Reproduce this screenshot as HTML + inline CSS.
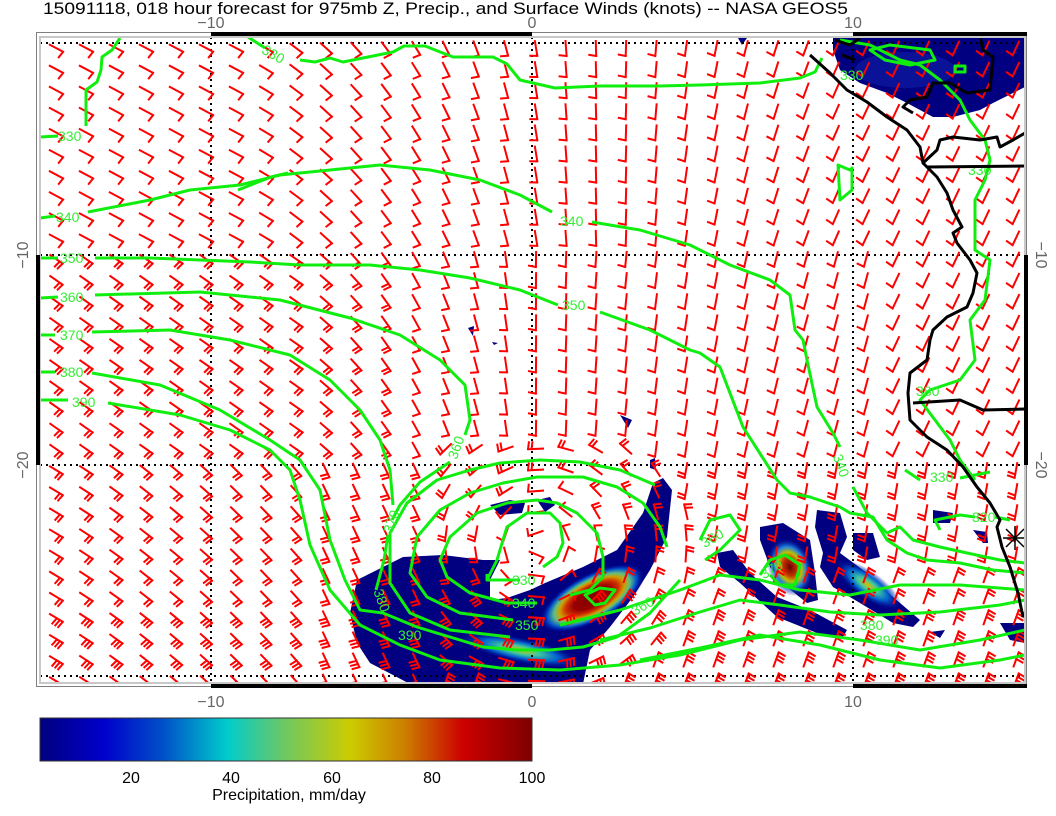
<!DOCTYPE html>
<html><head><meta charset="utf-8"><style>
html,body{margin:0;padding:0;background:#fff;}
body{width:1056px;height:816px;overflow:hidden;position:relative;font-family:"Liberation Sans",sans-serif;}
svg{position:absolute;left:0;top:0;}
</style></head><body>
<svg width="1056" height="816" viewBox="0 0 1056 816" xmlns="http://www.w3.org/2000/svg">
<defs>
<clipPath id="mc"><rect x="40" y="37" width="985" height="646"/></clipPath>
<linearGradient id="cb" x1="0" x2="1" y1="0" y2="0">
<stop offset="0" stop-color="#00007f"/><stop offset="0.13" stop-color="#0000cc"/>
<stop offset="0.25" stop-color="#0050c8"/><stop offset="0.38" stop-color="#00cccc"/>
<stop offset="0.5" stop-color="#70c860"/><stop offset="0.63" stop-color="#cccc00"/>
<stop offset="0.74" stop-color="#cc8000"/><stop offset="0.86" stop-color="#cc0000"/>
<stop offset="1" stop-color="#7f0000"/></linearGradient>
<radialGradient id="core1"><stop offset="0" stop-color="#7f0000"/><stop offset="0.35" stop-color="#990000"/><stop offset="0.5" stop-color="#d03000"/><stop offset="0.62" stop-color="#d0a000"/><stop offset="0.72" stop-color="#60c080"/><stop offset="0.85" stop-color="#0050d0"/><stop offset="1" stop-color="#000090" stop-opacity="0"/></radialGradient>
<radialGradient id="core2"><stop offset="0" stop-color="#d0c000"/><stop offset="0.3" stop-color="#40c8a0"/><stop offset="0.6" stop-color="#0060d0"/><stop offset="1" stop-color="#000090" stop-opacity="0"/></radialGradient>
<radialGradient id="core3"><stop offset="0" stop-color="#6a0000"/><stop offset="0.3" stop-color="#c03000"/><stop offset="0.5" stop-color="#c0c000"/><stop offset="0.7" stop-color="#2080e0"/><stop offset="1" stop-color="#000090" stop-opacity="0"/></radialGradient>
</defs>
<text x="43" y="14" font-size="17" fill="#000" textLength="805" lengthAdjust="spacingAndGlyphs">15091118, 018 hour forecast for 975mb Z, Precip., and Surface Winds (knots) -- NASA GEOS5</text>
<g clip-path="url(#mc)">
<g fill="#000080">
<path d="M357,580 L403,557 443,555 483,560 500,560 490,580 490,600 507,598 530,590 545,583 583,567 617,550 643,513 653,483 663,478 672,490 667,537 650,570 633,597 610,627 590,650 583,684 410,684 393,675 370,663 357,643 350,613Z"/>
<path d="M490,505 L510,500 525,503 522,513 500,515Z"/><path d="M537,500 L550,497 555,505 545,512Z"/>
<path d="M760,527 L783,523 810,540 815,573 818,600 807,603 787,587 770,567 760,540Z"/>
<path d="M717,553 L733,550 750,573 777,597 810,610 847,630 843,637 817,633 777,617 740,583 720,567Z"/>
<path d="M817,510 L840,513 847,537 840,553 867,573 893,597 920,620 913,627 893,623 860,603 833,587 820,567 823,553 815,527Z"/>
<path d="M853,533 L873,533 880,557 867,560 853,550Z"/>
<path d="M933,510 L953,513 950,523 933,523Z"/><path d="M973,530 L987,532 988,543 983,543Z"/>
<path d="M1000,623 L1025,623 1025,643 1010,640Z"/><path d="M930,632 L945,630 940,638Z"/>
<path d="M620,415 L632,420 628,428Z"/><path d="M650,460 L655,458 656,470 650,468Z"/>
<path d="M468,328 L474,326 473,336Z"/><path d="M492,342 L498,343 494,345Z"/>
<path d="M833,37 L1025,37 1025,87 1013,93 993,103 980,110 953,117 933,117 920,110 907,103 887,93 860,83 840,70 833,50Z"/>
<path d="M738,38 L747,38 742,45Z"/>
</g>
<ellipse cx="592" cy="598" rx="58" ry="24" transform="rotate(-28 592 598)" fill="url(#core1)"/>
<ellipse cx="520" cy="650" rx="65" ry="13" transform="rotate(12 520 650)" fill="url(#core2)"/>
<ellipse cx="790" cy="567" rx="22" ry="30" transform="rotate(-20 790 567)" fill="url(#core3)"/>
<ellipse cx="868" cy="585" rx="40" ry="14" transform="rotate(35 868 585)" fill="url(#core2)"/>
<ellipse cx="905" cy="70" rx="50" ry="18" fill="#1020a8" opacity="0.6"/>
<g stroke="#000" stroke-width="2" stroke-dasharray="2 4" fill="none">
<path d="M40,43H1025M40,255H1025M40,465H1025M40,676H1025M211,37V683M532,37V683M853,37V683"/>
</g>
<g id="barbs" stroke="#ff0000" stroke-width="2" fill="none" stroke-linecap="square"></g>
<g stroke="#10ee10" stroke-width="3" fill="none" stroke-linejoin="round">
<path d="M40,137 L58,136 M86,126 L86,90 97,82 101,70 102,57 112,50 120,38"/>
<path d="M248,37 L265,48 M300,60 L315,62 330,58 343,62 393,52 404,46 425,46 453,57 493,57 507,64 520,80 555,88 600,86 660,86 700,85 760,83 800,78 815,72 822,58"/>
<path d="M238,190 L271,177 288,173"/>
<path d="M40,218 L55,216 M88,212 L150,200 190,190 240,185 280,175 330,170 380,165 430,170 480,180 520,195 552,212 M592,222 L640,230 690,245 730,265 770,280 790,295 795,330 803,340 807,360 817,407 833,433 840,447 M853,487 L867,513 877,523 887,533 900,527 913,540 940,547 967,553 1000,560 1025,563"/>
<path d="M40,258 L58,258 M95,258 L150,258 250,262 300,265 370,265 420,270 470,278 520,290 558,305 M600,312 L650,330 690,350 700,353 720,367 743,427 777,480 790,493 810,497 840,507 850,513 873,517 887,540 907,553 927,560 960,563 993,570 1025,573"/>
<path d="M40,298 L58,297 M95,295 L200,292 280,300 350,318 400,335 440,360 465,385 470,420 465,435 M450,462 L420,482 400,505 392,520"/>
<path d="M40,335 L55,335 M92,332 L170,330 230,340 290,355 330,380 360,410 380,440 390,470 393,505 M388,535 L384,560 376,590"/>
<path d="M40,372 L55,372 M92,373 L160,385 220,410 270,440 300,460 320,490 330,540 345,580 360,610 383,613 417,627 450,637 483,647 517,650 550,650 583,647 617,637 650,613 680,580"/>
<path d="M40,400 L68,400 M108,403 L180,415 230,430 270,450 290,470 300,500 310,545 330,590 360,625 400,645 440,660 500,668 560,670 620,665 680,655 740,640 800,632 860,640 920,650 980,640 1025,630"/>
<path d="M487,580 L497,560 503,540 507,527 527,513 550,513 560,523 563,543 557,557 543,567 M520,580 L487,580 487,574"/>
<path d="M537,603 L507,603 470,593 447,577 440,560 450,537 477,513 507,503 537,500 557,503 577,513 597,533 603,557 603,577 590,590 570,595"/>
<path d="M513,620 L460,613 427,597 410,573 417,537 440,510 470,493 503,483 537,477 583,477 617,487 643,503 660,527 667,547"/>
<path d="M510,637 L450,630 410,613 390,583 390,533 407,503 437,480 470,470 500,463 540,460 580,462 620,470 655,485"/>
<path d="M595,605 L585,595 600,588 615,590 605,603Z"/>
<path d="M560,625 L620,610 680,590 720,575 760,580 800,590 850,595 900,585 960,585 1025,590"/>
<path d="M600,640 L650,628 700,612 740,600 780,605 830,612 880,615 940,612 1000,605 1025,600"/>
<path d="M640,660 L700,648 760,635 820,645 880,660 940,668 1000,660 1025,655"/>
<path d="M700,540 L710,520 730,515 740,530 720,550 705,560 M760,575 L770,560 785,555 800,565 795,585 780,585 770,575"/>
<path d="M920,480 L905,470 M960,478 L990,472 M940,530 L935,520 960,515 975,517 M995,517 L1010,520"/>
<path d="M850,170 L838,165 840,200 852,190 852,168Z"/>
<path d="M840,40 L870,45 900,60 920,65 940,80 960,100 970,120 985,140 990,160 985,180 975,200 975,250 990,260 985,300 970,320 975,360 960,380 930,390 920,400 935,420 950,440 960,460 975,480"/>
<path d="M870,50 L890,45 930,50 935,60 910,65 885,60Z"/><path d="M955,66 h10 v6 h-10Z"/>
</g>
<g fill="#33ee33" font-size="14">
<text x="58" y="141">330</text><text x="262" y="56" transform="rotate(30 268 52)">330</text>
<text x="56" y="222">340</text><text x="560" y="226">340</text>
<text x="60" y="263">350</text><text x="562" y="310">350</text>
<text x="60" y="302">360</text><text x="60" y="340">370</text>
<text x="60" y="377">380</text><text x="72" y="407">390</text>
<text x="382" y="530" transform="rotate(-70 390 525)">370</text>
<text x="446" y="455" transform="rotate(-70 455 450)">360</text>
<text x="512" y="585">330</text><text x="512" y="608">340</text><text x="515" y="630">350</text>
<text x="374" y="600" transform="rotate(70 380 595)">380</text><text x="398" y="640">390</text>
<text x="630" y="612" transform="rotate(-30 640 605)">360</text>
<text x="700" y="543" transform="rotate(-30 712 537)">360</text>
<text x="760" y="575" transform="rotate(-30 770 570)">370</text>
<text x="860" y="630">380</text><text x="875" y="645">390</text>
<text x="930" y="482">330</text><text x="972" y="522">320</text>
<text x="968" y="175">330</text><text x="840" y="80">330</text>
<text x="832" y="467" transform="rotate(70 840 462)">340</text>
<text x="916" y="396">380</text>
</g>
<g stroke="#000" stroke-width="3" fill="none" stroke-linejoin="round">
<path d="M810,55 L830,73 847,90 867,102 887,117 907,130 920,147 923,163 937,177 947,193 953,210 962,227 953,233 957,243 970,260 977,273 973,293 967,307 947,317 933,330 930,340 927,360 910,373 908,393 910,420 927,437 947,450 963,467 977,487 990,503 1000,520 997,527 1002,547 1010,567 1018,593 1023,617"/>
<path d="M913,403 L960,400 983,410 1025,409"/>
<path d="M927,167 L1025,166"/>
<path d="M923,163 L937,150 940,140 953,137 980,140 997,137 1000,147 1013,140 1025,133"/>
<path d="M980,37 L983,50 993,57 990,90 967,93 950,83 933,83 927,97 910,100 903,107 913,113"/>
<path d="M835,40 L850,45 860,38 M842,55 L855,60"/>
</g>
<g stroke="#000" stroke-width="1.5"><path d="M1003,538 H1027 M1015,526 V550 M1006,529 L1024,547 M1024,529 L1006,547"/></g>
</g>
<rect x="36.5" y="32.5" width="990" height="654" fill="none" stroke="#808080"/>
<rect x="40" y="37" width="985" height="646" fill="none" stroke="#c8c8c8" stroke-width="2"/>
<g fill="#000">
<rect x="211" y="32" width="321" height="4"/><rect x="853" y="32" width="174" height="4"/>
<rect x="211" y="684" width="321" height="4"/><rect x="853" y="684" width="174" height="4"/>
<rect x="36" y="255" width="4" height="210"/><rect x="1024" y="255" width="4" height="210"/>
</g>
<g fill="#666" font-size="16" text-anchor="middle">
<text x="211" y="28">−10</text><text x="532" y="28">0</text><text x="853" y="28">10</text>
<text x="211" y="707">−10</text><text x="532" y="707">0</text><text x="853" y="707">10</text>
<text transform="translate(28,255) rotate(-90)">−10</text><text transform="translate(28,465) rotate(-90)">−20</text>
<text transform="translate(1036,255) rotate(90)">−10</text><text transform="translate(1036,465) rotate(90)">−20</text>
</g>
<rect x="40" y="718" width="492" height="43" fill="url(#cb)" stroke="#333" stroke-width="1"/>
<g fill="#000" font-size="16" text-anchor="middle">
<text x="131" y="783">20</text><text x="231" y="783">40</text><text x="332" y="783">60</text><text x="432" y="783">80</text><text x="532" y="783">100</text>
<text x="289" y="800">Precipitation, mm/day</text>
</g>
</svg>
<script>
(function(){
var g=document.getElementById('barbs'),s='';
function lerp(a,b,t){t=Math.max(0,Math.min(1,t));return a+(b-a)*t;}
for(var j=0;j<31;j++){var y=48+21.1*j;
for(var i=0;i<33;i++){var x=56+30*i;
var a,n=1;
var dx=x-540,dy=y-545,r=Math.sqrt(dx*dx+dy*dy);
if(r<150&&x>430&&y>440){a=Math.atan2(dy,dx)*180/Math.PI-90;n=r<60?1:(y>590?3:2);}
else if(x>=880&&y<460){a=115;}
else if(y<250){if(x<250)a=28;else if(x<560)a=lerp(28,85,(x-250)/310);else a=lerp(85,115,(x-560)/290);n=1;}
else if(y<470){if(x<300)a=35;else if(x<520)a=lerp(35,85,(x-300)/220);else a=lerp(90,105,(x-520)/280);n=x<400?2:1;}
else{if(x<320)a=lerp(30,50,(x-40)/280);else if(x<430)a=65;else if(y<560)a=100;else a=-70;n=y>600?3:2;}
var rad=a*Math.PI/180,cx=Math.cos(rad),cy=Math.sin(rad);
var t=(a+100)*Math.PI/180,tx=Math.cos(t),ty=Math.sin(t);
var x0=x-cx*7,y0=y-cy*7,x1=x+cx*8,y1=y+cy*8;
s+='M'+x0.toFixed(1)+','+y0.toFixed(1)+'L'+x1.toFixed(1)+','+y1.toFixed(1);
for(var k=0;k<n;k++){var bx=x1-cx*3.5*k,by=y1-cy*3.5*k;
s+='M'+bx.toFixed(1)+','+by.toFixed(1)+'l'+(tx*7).toFixed(1)+','+(ty*7).toFixed(1);}
}}
var p=document.createElementNS('http://www.w3.org/2000/svg','path');p.setAttribute('d',s);g.appendChild(p);
})();
</script>
</body></html>
